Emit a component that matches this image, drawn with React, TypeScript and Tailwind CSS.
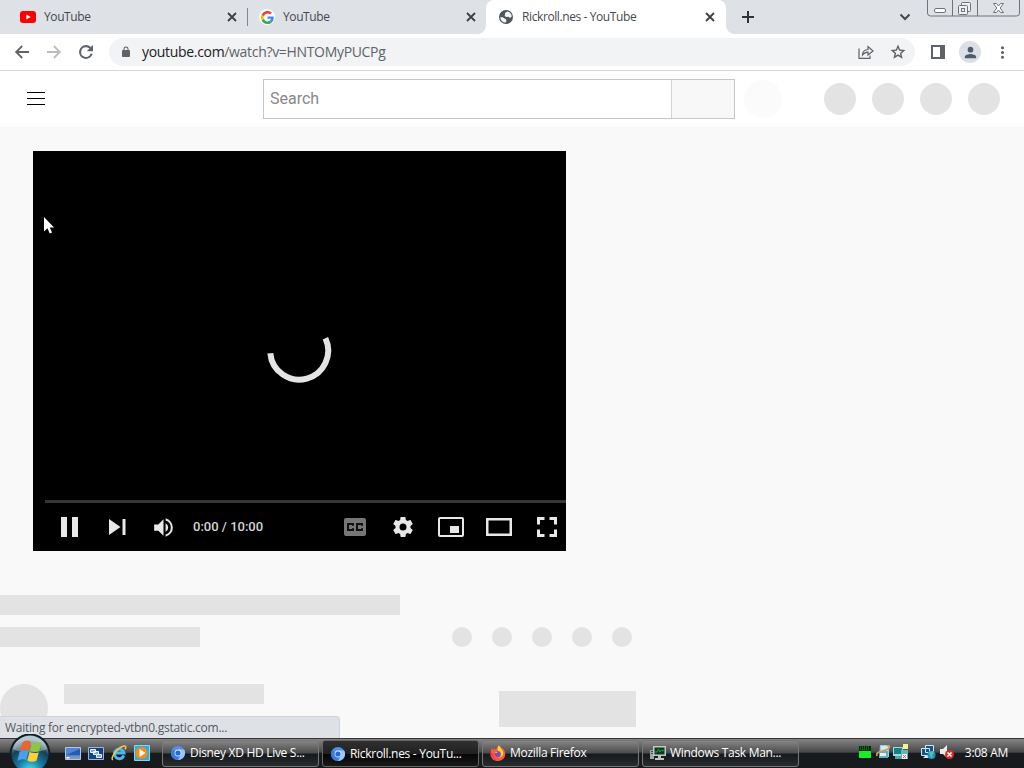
import type { ReactNode } from 'react';

const UI_FONT = "font-['Open_Sans','Noto_Sans',sans-serif]";

interface IconProps {
  d: string;
  className?: string;
}

function Icon({ d, className = 'size-5' }: IconProps) {
  return (
    <svg viewBox="0 0 24 24" fill="currentColor" className={`block shrink-0 ${className}`}>
      <path fillRule="evenodd" d={d} />
    </svg>
  );
}

const PATHS = {
  back: 'M20.500 10.800H7.830l5.100-5.100L11.500 4l-8 8 8 8 1.500-1.600-5.170-5.100H20.500v-2.500z',
  forward: 'M12.500 4l-1.500 1.700 5.170 5.100H3.500v2.500h12.670L11 18.400l1.500 1.600 8-8z',
  reload:
    'M17.800 6.100A8.300 8.300 0 0 0 12 3.700a8.300 8.300 0 1 0 8 10.400h-2.600A5.800 5.800 0 1 1 12 6.200c1.600 0 3 .65 4.100 1.700L13 11h7.400V3.600L17.800 6.100z',
  lock: 'M18 8h-1V6A5 5 0 0 0 7 6v2H6a2 2 0 0 0-2 2v10c0 1.100.9 2 2 2h12a2 2 0 0 0 2-2V10a2 2 0 0 0-2-2zM9 6a3 3 0 0 1 6 0v2H9V6z',
  star: 'M22 9.240l-7.190-.62L12 2 9.190 8.630 2 9.240l5.460 4.730L5.820 21 12 17.270 18.180 21l-1.630-7.030L22 9.240zM12 15.100l-3.400 2.050.9-3.870-3-2.600 3.960-.34L12 6.700l1.550 3.650 3.960.34-3 2.600.9 3.870L12 15.100z',
  person: 'M12 12a4 4 0 1 0 0-8 4 4 0 0 0 0 8zm0 2c-2.670 0-8 1.340-8 4v2h16v-2c0-2.660-5.330-4-8-4z',
  more: 'M12 8a2 2 0 1 0 0-4 2 2 0 0 0 0 4zm0 2a2 2 0 1 0 0 4 2 2 0 0 0 0-4zm0 6a2 2 0 1 0 0 4 2 2 0 0 0 0-4z',
  gear: 'M19.430 12.980c.04-.32.07-.64.07-.98s-.03-.66-.07-.98l2.110-1.650c.19-.15.24-.42.12-.64l-2-3.460c-.12-.22-.39-.3-.61-.22l-2.490 1c-.52-.4-1.080-.73-1.690-.98l-.38-2.650A.488.488 0 0 0 14 2h-4c-.25 0-.46.18-.49.42l-.38 2.650c-.61.25-1.170.59-1.690.98l-2.490-1c-.23-.09-.49 0-.61.22l-2 3.460c-.13.22-.07.49.12.64l2.110 1.650c-.04.32-.07.65-.07.98s.03.66.07.98l-2.110 1.650c-.19.15-.24.42-.12.64l2 3.460c.12.22.39.3.61.22l2.490-1c.52.4 1.080.73 1.690.98l.38 2.650c.03.24.24.42.49.42h4c.25 0 .46-.18.49-.42l.38-2.650c.61-.25 1.170-.59 1.690-.98l2.490 1c.23.09.49 0 .61-.22l2-3.460c.12-.22.07-.49-.12-.64l-2.110-1.650zM12 15.500a3.500 3.500 0 1 1 0-7 3.500 3.500 0 0 1 0 7z',
  volume:
    'M3 9v6h4l5 5V4L7 9H3zm13.500 3A4.500 4.500 0 0 0 14 7.970v8.050A4.480 4.480 0 0 0 16.500 12zM14 3.230v2.060a7 7 0 0 1 0 13.420v2.060a9 9 0 0 0 0-17.540z',
};

function Cross() {
  return (
    <svg viewBox="0 0 10 10" className="size-[10px] shrink-0" stroke="#3c4043" strokeWidth="1.8">
      <path d="M1 1l8 8M9 1L1 9" />
    </svg>
  );
}

function YoutubeLogo() {
  return (
    <svg viewBox="0 0 16 12" className="h-3 w-4 shrink-0">
      <rect width="16" height="12" rx="3" fill="#f00" />
      <path d="M6.400 3.500v5l4.200-2.500z" fill="#fff" />
    </svg>
  );
}

function GoogleLogo() {
  return (
    <span className="flex size-4 shrink-0 items-center justify-center rounded-full bg-white">
      <svg viewBox="0 0 48 48" className="size-[13px]">
        <path fill="#4285f4" d="M47 24.500c0-1.600-.2-3.200-.4-4.500H24v9h13c-.6 3-2.300 5.500-4.800 7.200l7.600 6C44.300 38 47 31.800 47 24.500z" />
        <path fill="#34a853" d="M24 48c6.500 0 11.900-2.100 15.900-5.800l-7.700-6A14.500 14.500 0 0 1 10.500 28.600l-8 6.200A24 24 0 0 0 24 48z" />
        <path fill="#fbbc05" d="M10.500 28.600a14.500 14.500 0 0 1 0-9.200l-8-6.200a24 24 0 0 0 0 21.600z" />
        <path fill="#ea4335" d="M24 9.500c3.500 0 6.700 1.200 9.200 3.600l6.900-6.900A24 24 0 0 0 2.500 13.200l8 6.200A14.300 14.300 0 0 1 24 9.500z" />
      </svg>
    </span>
  );
}

function GlobeLogo() {
  return (
    <svg viewBox="0 0 16 16" className="size-4 shrink-0">
      <circle cx="8" cy="8" r="7" fill="#50555a" />
      <path d="M2.200 8.200l2.500.1 2 1.300 1.500 1 .1 2.700-2 .3C3.900 12.700 2.300 10.600 2.200 8.200zM7 3.900l2.300-1.500c2.400.5 4.400 2.600 4.500 5.200l-1.800 1.300-1.500-1.200-2.500.2-1.400-1.100L7 5.900z" fill="#f1f3f4" />
    </svg>
  );
}

function TabLabel({ children }: { children: ReactNode }) {
  return <span className="flex-1 truncate text-xs tracking-[-0.4px] text-[#45494d]">{children}</span>;
}

function TabStrip() {
  return (
    <div className="flex h-[34px] bg-[#dee1e6]">
      <div className="flex w-[247px] items-center gap-2 pr-[10px] pl-5">
        <YoutubeLogo />
        <TabLabel>YouTube</TabLabel>
        <Cross />
      </div>
      <div className="flex w-[239px] items-center">
        <div className="h-[18px] w-px bg-[#80868b]" />
        <div className="flex flex-1 items-center gap-2 pr-[10px] pl-[11px]">
          <GoogleLogo />
          <TabLabel>YouTube</TabLabel>
          <Cross />
        </div>
      </div>
      <div className="relative flex w-[240px] items-center gap-2 rounded-t-lg bg-white pr-[11px] pl-3">
        <div className="absolute bottom-0 -left-2 size-2 bg-[radial-gradient(circle_at_0_0,#dee1e6_7.5px,#fff_8px)]" />
        <div className="absolute -right-2 bottom-0 size-2 bg-[radial-gradient(circle_at_100%_0,#dee1e6_7.5px,#fff_8px)]" />
        <GlobeLogo />
        <TabLabel>Rickroll.nes - YouTube</TabLabel>
        <Cross />
      </div>
      <div className="flex flex-1 items-center pl-4">
        <svg viewBox="0 0 12 12" className="size-3" stroke="#303336" strokeWidth="2">
          <path d="M6 0v12M0 6h12" />
        </svg>
        <svg viewBox="0 0 12 12" className="ml-[145px] size-3" fill="none" stroke="#45494d" strokeWidth="2">
          <path d="M1.500 3.500L6 8l4.500-4.500" />
        </svg>
        <svg viewBox="0 0 93 17" className="ml-4 h-[17px] w-[93px] self-start" fill="none" stroke="#70747a">
          <path d="M.5 0v13q0 3 3 3h86q3 0 3-3V0M25.500 0v16M50.500 0v16" />
          <rect x="7.500" y="8.500" width="11" height="4" rx="1.500" fill="#fff" />
          <g fill="#eef0f3">
            <rect x="34.500" y="2.500" width="9" height="9" rx="1" />
            <rect x="31.500" y="5.500" width="9" height="9" rx="1" />
            <rect x="34.500" y="8.500" width="3" height="3" />
          </g>
          <path d="M66.500 3.500h3l2 2.500 2-2.500h3l-3.300 4.500 3.300 4.500h-3l-2-2.500-2 2.500h-3l3.300-4.500z" fill="#fff" />
        </svg>
      </div>
    </div>
  );
}

function Toolbar() {
  return (
    <div className="flex h-[37px] items-center border-b border-[#d5d7d9] bg-white pl-3 text-[#5f6368]">
      <Icon d={PATHS.back} />
      <Icon d={PATHS.forward} className="ml-3 size-5 text-[#babcbe]" />
      <Icon d={PATHS.reload} className="ml-3 size-5" />
      <div className="ml-[13px] flex h-7 w-[806px] items-center rounded-full bg-[#f1f3f4] pr-2 pl-[11px]">
        <Icon d={PATHS.lock} className="size-3" />
        <span className="ml-[10px] flex-1 text-sm tracking-[-0.32px]">
          <span className="text-[#202124]">youtube.com</span>/watch?v=HNTOMyPUCPg
        </span>
        <svg viewBox="0 0 16 16" className="size-4" fill="none" stroke="#5f6368" strokeWidth="1.2">
          <path d="M1 4.500v9.900h11v-3M4.500 11c.2-3.600 2-5.300 5.500-5.500V2.500l5 4.500-5 4V8.200C7.500 8.200 6 9 4.500 11z" />
        </svg>
        <Icon d={PATHS.star} className="ml-[15px] size-[18px]" />
      </div>
      <svg viewBox="0 0 14 14" className="ml-4 h-[14px] w-[14px]">
        <path d="M1 1h12v12H1z" fill="none" stroke="#5f6368" strokeWidth="2" />
        <path d="M9 0h5v14H9z" fill="#5f6368" />
      </svg>
      <div className="ml-[14px] flex size-[22px] items-center justify-center rounded-full bg-[#dce0e6]">
        <Icon d={PATHS.person} className="size-[17px] text-[#4c5b6e]" />
      </div>
      <Icon d={PATHS.more} className="ml-3 size-[19px]" />
    </div>
  );
}

function Masthead() {
  return (
    <header className="flex h-14 shrink-0 items-center bg-white pr-6 pl-[27px]">
      <div className="mb-px flex w-[18px] flex-col gap-[5px]">
        <div className="h-px bg-black" />
        <div className="h-px bg-black" />
        <div className="h-px bg-black" />
      </div>
      <div className="ml-[218px] flex h-10 w-[472px] border border-[#c6c6c6] font-[Roboto,sans-serif]">
        <div className="flex-1 pt-[7px] pl-[6px] text-base text-[#888]">Search</div>
        <div className="w-[63px] border-l border-[#d3d3d3] bg-[#f8f8f8]" />
      </div>
      <div className="ml-[9px] size-[38px] rounded-full bg-[#fbfbfb]" />
      <div className="ml-auto flex gap-4">
        {[0, 1, 2, 3].map((i) => (
          <div key={i} className="size-8 rounded-full bg-[#e3e3e3]" />
        ))}
      </div>
    </header>
  );
}

function PlayerControls() {
  return (
    <div className="flex h-12 items-center text-[#e8e8e8]">
      <svg viewBox="0 0 17 20" className="ml-7 h-5 w-[17px]" fill="currentColor">
        <path d="M0 0h6v20H0zM11 0h6v20h-6z" />
      </svg>
      <svg viewBox="0 0 17 16" className="ml-[31px] h-4 w-[17px]" fill="currentColor">
        <path d="M0 0l11.500 8L0 16zM13.500 0h3v16h-3z" />
      </svg>
      <Icon d={PATHS.volume} className="ml-[25px] size-[25px]" />
      <span className="ml-[17px] w-[151px] font-[Roboto,sans-serif] text-[13px] font-medium text-[#d4d4d4]">
        0:00 / 10:00
      </span>
      <div className="flex h-[18px] w-[22px] items-center justify-center rounded-xs bg-[#777]">
        <svg viewBox="0 0 16 8" className="h-2 w-4" fill="none" stroke="#111" strokeWidth="2">
          <path d="M6 2.800V1H1v6h5V5.200M15 2.800V1h-5v6h5V5.200" />
        </svg>
      </div>
      <Icon d={PATHS.gear} className="ml-[25px] size-[24px]" />
      <svg viewBox="0 0 26 20" className="ml-[23px] h-5 w-[26px]" fill="none" stroke="currentColor" strokeWidth="2">
        <rect x="1" y="1" width="24" height="18" rx="1" />
        <path d="M12 9h9v7h-9z" fill="currentColor" stroke="none" />
      </svg>
      <svg viewBox="0 0 26 18" className="ml-[22px] h-[18px] w-[26px]" fill="none" stroke="currentColor" strokeWidth="2.5">
        <path d="M1.250 1.250h23.500v15.500H1.250z" />
      </svg>
      <svg viewBox="0 0 20 20" className="ml-[25px] size-5" fill="none" stroke="currentColor" strokeWidth="3">
        <path d="M1.500 7.500v-6h6M12.500 1.500h6v6M18.500 12.500v6h-6M7.500 18.500h-6v-6" />
      </svg>
    </div>
  );
}

function Player() {
  return (
    <div className="relative mt-6 ml-[33px] flex h-[400px] w-[533px] flex-col bg-black">
      <svg viewBox="0 0 12 18" className="absolute top-[65px] left-[10px] h-[18px] w-3">
        <path d="M1 1v14.500l3.400-3.200L6.800 17.500l2.300-1-2.400-5H11z" fill="#fff" />
      </svg>
      <div className="flex flex-1 items-end justify-center pr-[2px] pb-[116px]">
        <svg viewBox="0 0 66 66" className="size-[66px]" fill="none" stroke="#e4e4e4" strokeWidth="6">
          <path d="M4.300 35.200A29 29 0 1 0 59.400 20.200" />
        </svg>
      </div>
      <div className="ml-3 h-[3px] bg-[#353535]" />
      <PlayerControls />
    </div>
  );
}

function DetailsSkeleton() {
  return (
    <div className="mt-11 flex flex-col">
      <div className="h-5 w-[400px] bg-[#e3e3e3]" />
      <div className="mt-3 flex items-center">
        <div className="h-5 w-[200px] bg-[#e3e3e3]" />
        <div className="ml-[252px] flex gap-5">
          {[0, 1, 2, 3, 4].map((i) => (
            <div key={i} className="size-5 rounded-full bg-[#e3e3e3]" />
          ))}
        </div>
      </div>
      <div className="mt-[37px] flex items-start">
        <div className="size-12 rounded-full bg-[#e3e3e3]" />
        <div className="ml-4 h-5 w-[200px] bg-[#e3e3e3]" />
        <div className="mt-[7px] ml-[235px] h-9 w-[137px] bg-[#e3e3e3]" />
      </div>
    </div>
  );
}

function ChromiumLogo() {
  return (
    <svg viewBox="0 0 16 16" className="size-4 shrink-0">
      <circle cx="8" cy="8" r="7" fill="#4f8ff0" />
      <path d="M8 8L2 4.300A7 7 0 0 0 7.700 15L11 9.500z" fill="#3b7be0" />
      <path d="M8 4.600h6.200A7 7 0 0 1 8 15l3-5.300z" fill="#9cc3fa" />
      <circle cx="8" cy="8" r="3.400" fill="#dceaff" />
      <circle cx="8" cy="8" r="2.600" fill="#2869d5" />
    </svg>
  );
}

function FirefoxLogo() {
  return (
    <svg viewBox="0 0 16 16" className="size-4 shrink-0">
      <path d="M9 0c.8 2 4.500 3 5.800 6.300C16.700 11.500 13 16 8 16S-.5 12 .7 7.300L1.600 3l1.600 1.600 1.500-1.300 1 1.500C7 3 7.700 2 9 0z" fill="#ff5a35" />
      <path d="M9 0c.4 2.600 3.500 3.500 4.200 7 .7 3.700-2 6-5.400 5.500 4.500-.7 3-4.500.2-6.500C7 4 7.700 2 9 0z" fill="#ffd43b" />
      <path d="M1 7.500C.5 12 4 15.500 8 15.400c-3-.8-5-3-4.800-6.400z" fill="#f5316b" />
      <circle cx="7.800" cy="9" r="3" fill="#7949c9" />
      <path d="M4.500 7.500c1-1.200 2.300-1.300 3.500-.4L6.500 8.300z" fill="#ffa42d" />
    </svg>
  );
}

function TaskManagerLogo() {
  return (
    <svg viewBox="0 0 16 16" className="size-4 shrink-0">
      <path d="M0 5h4v9H0z" fill="#a4a7a6" />
      <path d="M1 6h2v1H1zM1 8h2v1H1z" fill="#444" />
      <path d="M3 1h13v10H3z" fill="#c3c6c2" />
      <path d="M4.500 2.500h10v7h-10z" fill="#063e20" />
      <path d="M5 7h2l1.500-3L10 7l1.500-2L14 6" fill="none" stroke="#239747" />
      <path d="M8 11h3v2h3v2H5v-2h3z" fill="#bfc2c0" />
    </svg>
  );
}

interface TaskButtonProps {
  icon: ReactNode;
  label: string;
  active?: boolean;
}

function TaskButton({ icon, label, active = false }: TaskButtonProps) {
  const look = active
    ? 'border-[#666] bg-[linear-gradient(#303030,#202020_50%,#050505_52%,#191919)] pt-px'
    : 'border-[#777] bg-[linear-gradient(#858585,#4b4b4b_48%,#171a1c_52%,#292c2e)] pb-px';
  return (
    <div className={`flex h-[27px] w-[157px] items-center gap-1 rounded-[3px] border pl-[7px] text-white ${look}`}>
      {icon}
      <span className="text-xs tracking-[-0.3px] whitespace-nowrap">{label}</span>
    </div>
  );
}

function StartOrb() {
  return (
    <svg viewBox="0 0 44 34" className="absolute bottom-0 left-2 h-[34px] w-11">
      <defs>
        <radialGradient id="orb" cx=".5" cy=".95" r=".85">
          <stop offset="0" stopColor="#4ce3f2" />
          <stop offset=".4" stopColor="#1679a3" />
          <stop offset=".75" stopColor="#174054" />
          <stop offset="1" stopColor="#8eabb8" />
        </radialGradient>
      </defs>
      <circle cx="22" cy="20" r="20.500" fill="#101d25" />
      <circle cx="22" cy="20" r="18.500" fill="url(#orb)" />
      <path d="M5 15a17.500 17.500 0 0 1 34 0c-8 4-25 5-34 0z" fill="#fff" opacity=".35" />
      <path d="M14.500 8.500q4-3.500 8.500-.5l-2.200 8.500q-4.300-2-8.800.5z" fill="#ee6330" />
      <path d="M24 8.500q4.500 2 9.500-.5l-2.300 9q-4.700 2-9.400-.2z" fill="#8dc63f" />
      <path d="M11.500 18q4.500-2.500 9-.5l-2.300 8.500q-4-2-8.700.7z" fill="#4a9fe8" />
      <path d="M21.500 18q4.500 2 9.300.2l-2.300 8.600q-4.500 2.200-9.200-.3z" fill="#ffce32" />
    </svg>
  );
}

function QuickLaunch() {
  return (
    <div className="mb-px ml-16 flex w-[97px] items-center gap-[7px]">
      <svg viewBox="0 0 16 13" className="h-[13px] w-4">
        <path d="M.5.5h15v12H.5z" fill="#4f87d8" stroke="#b5c6d9" />
        <path d="M1 8L15 2v6z" fill="#275bac" />
        <path d="M1 9.500h14V12H1z" fill="#7f9bb8" />
        <path d="M1.500 10h3v1.500h-3z" fill="#fff" />
      </svg>
      <svg viewBox="0 0 16 13" className="h-[13px] w-4">
        <path d="M.5.5h15v12H.5z" fill="#16437f" stroke="#9cb7d5" />
        <path d="M2.500 2.500h5v3h-5zM5.500 4.500h5v3h-5zM8.500 7.500h5v3h-5z" fill="#78a9dd" stroke="#eef6ff" />
      </svg>
      <svg viewBox="0 0 16 16" className="size-4" fill="none">
        <path d="M12.800 10.600A4.800 4.800 0 1 1 13 8H4" stroke="#4db6f0" strokeWidth="3" />
        <path d="M1.800 15C-1 13 6 3.500 12 1.300c3-1 3.500.8 2 3" stroke="#f5ca3f" strokeWidth="1.5" />
      </svg>
      <svg viewBox="0 0 16 16" className="size-4">
        <path d="M.5.500h15v15H.5z" fill="#36acd3" stroke="#90d3e8" />
        <circle cx="7.500" cy="8" r="6" fill="#f58b1f" />
        <path d="M5.500 4v8l6-4z" fill="#fff" />
      </svg>
    </div>
  );
}

function Tray() {
  return (
    <div className="ml-auto flex items-center pr-4">
      <div className="mb-[3px] flex items-center">
        <svg viewBox="0 0 12 13" className="h-[13px] w-3">
          <path d="M0 0h12v13H0z" fill="#052a08" />
          <path d="M0 5h12v7H0z" fill="#16ef27" />
          <path d="M1 1h10M1 3h10" stroke="#179924" strokeDasharray="1 1" />
        </svg>
        <svg viewBox="0 0 15 16" className="ml-[5px] h-4 w-[15px]">
          <path d="M4 1h9v12H3z" fill="#9bcfdd" />
          <path d="M5 2h7v5H5z" fill="#d2e9ed" />
          <path d="M3 7h9v7H3z" fill="#62acc6" />
          <path d="M4 9h6v3H4z" fill="#e7f2ee" />
          <path d="M1 12C-1 7 7 8 12 5c3-2 1-4-1-3" fill="none" stroke="#c99b62" strokeWidth="1.8" />
        </svg>
        <svg viewBox="0 0 16 16" className="ml-[2px] size-4">
          <path d="M0 3h10v9H0z" fill="#9edbd8" />
          <path d="M1 4h8v6H1z" fill="#168184" />
          <path d="M2 12h6v3H2z" fill="#4da7a7" />
          <path d="M8 6h7v9H8z" fill="#62b5bd" />
          <path d="M10 0h5v5h-5z" fill="#f5f58b" />
          <path d="M9 10h5v5H9z" fill="#f2f2f2" />
          <path d="M10 11l3 3m0-3l-3 3" stroke="#d45d4c" />
        </svg>
        <svg viewBox="0 0 15 16" className="ml-[12px] h-4 w-[15px]">
          <path d="M4.500 1.500h8v7h-8zM.5 4.500h8v7h-8z" fill="#15528b" stroke="#d1e7f2" />
          <path d="M2 14h6v-2H4z" fill="#d1e7f2" />
          <circle cx="10.500" cy="11" r="4" fill="#238fca" />
          <path d="M8 9l3-2 2 2-2 2 1 2-2 1-1-3z" fill="#55c49a" />
        </svg>
        <svg viewBox="0 0 16 16" className="ml-[3px] size-4">
          <path d="M1 5h3l4-4v13l-4-4H1z" fill="#e9eceb" />
          <circle cx="10.500" cy="10.500" r="4.500" fill="#d82c2c" />
          <path d="M8.500 8.500l4 4m0-4l-4 4" stroke="#fff" strokeWidth="1.5" />
        </svg>
      </div>
      <span className="mb-[2px] ml-[10px] text-xs tracking-[-0.3px] text-white">3:08 AM</span>
    </div>
  );
}

function Taskbar() {
  return (
    <div className="relative flex h-[30px] items-center border-t border-[#353535] bg-[linear-gradient(#858585,#474747_45%,#181b1d_50%,#17191b)] pl-px">
      <StartOrb />
      <QuickLaunch />
      <div className="flex gap-[3px]">
        <TaskButton icon={<ChromiumLogo />} label="Disney XD HD Live S..." />
        <TaskButton icon={<ChromiumLogo />} label="Rickroll.nes - YouTu..." active />
        <TaskButton icon={<FirefoxLogo />} label="Mozilla Firefox" />
        <TaskButton icon={<TaskManagerLogo />} label="Windows Task Man..." />
      </div>
      <Tray />
    </div>
  );
}

export default function App() {
  return (
    <div className={`flex h-[768px] w-[1024px] flex-col overflow-hidden bg-[#f9f9f9] ${UI_FONT}`}>
      <TabStrip />
      <Toolbar />
      <main className="relative flex min-h-0 flex-1 flex-col overflow-hidden">
        <Masthead />
        <Player />
        <DetailsSkeleton />
        <div className="absolute bottom-0 left-0 flex h-[22px] w-[340px] items-center rounded-tr border-t border-r border-[#cfd2d6] bg-[#dee1e6] pl-[5px] text-xs tracking-[-0.25px] text-[#55595e]">
          Waiting for encrypted-vtbn0.gstatic.com...
        </div>
      </main>
      <Taskbar />
    </div>
  );
}
